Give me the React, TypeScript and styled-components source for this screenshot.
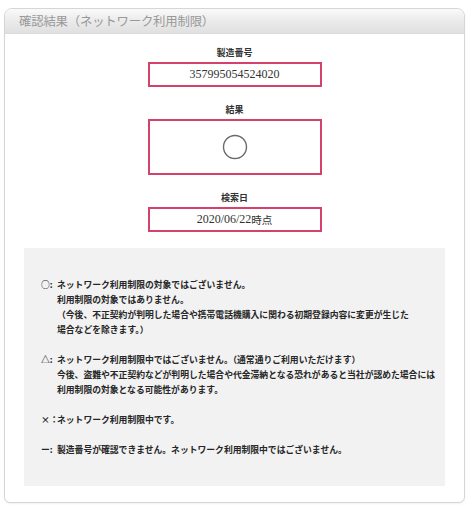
import React from 'react'
import styled, { createGlobalStyle } from 'styled-components'

const GlobalStyle = createGlobalStyle`
  html, body {
    margin: 0;
    padding: 0;
    background: #ffffff;
  }
  body {
    font-family: "Noto Sans CJK JP", "Noto Sans", sans-serif;
    color: #333;
  }
`;

interface INote {
  mark: string;
  lines: string[];
}

const notes: INote[] = [
  {
    mark: '○:',
    lines: [
      'ネットワーク利用制限の対象ではございません。',
      '利用制限の対象ではありません。',
      '（今後、不正契約が判明した場合や携帯電話機購入に関わる初期登録内容に変更が生じた',
      '場合などを除きます。）',
    ],
  },
  {
    mark: '△:',
    lines: [
      'ネットワーク利用制限中ではございません。（通常通りご利用いただけます）',
      '今後、盗難や不正契約などが判明した場合や代金滞納となる恐れがあると当社が認めた場合には',
      '利用制限の対象となる可能性があります。',
    ],
  },
  {
    mark: '×：',
    lines: ['ネットワーク利用制限中です。'],
  },
  {
    mark: 'ー:',
    lines: ['製造番号が確認できません。ネットワーク利用制限中ではございません。'],
  },
];

function App() {
  return (
    <>
      <GlobalStyle />
      <Page>
        <Panel>
          <PanelHeader>確認結果（ネットワーク利用制限）</PanelHeader>
          <PanelBody>
            <Field>
              <FieldLabel>製造番号</FieldLabel>
              <ValueBox>357995054524020</ValueBox>
            </Field>
            <Field>
              <FieldLabel>結果</FieldLabel>
              <ValueBox $tall>
                <svg width="26" height="26" viewBox="0 0 26 26">
                  <circle cx="13" cy="13" r="11.5" fill="none" stroke="#6a6a6a" strokeWidth="1.4" />
                </svg>
              </ValueBox>
            </Field>
            <Field>
              <FieldLabel>検索日</FieldLabel>
              <ValueBox>
                2020/06/22<CjkSuffix>時点</CjkSuffix>
              </ValueBox>
            </Field>
            <NoteBox>
              {notes.map((note) => (
                <NoteItem key={note.mark}>
                  <NoteMark>{note.mark}</NoteMark>
                  <NoteText>
                    {note.lines.map((line) => (
                      <div key={line}>{line}</div>
                    ))}
                  </NoteText>
                </NoteItem>
              ))}
            </NoteBox>
          </PanelBody>
        </Panel>
      </Page>
    </>
  )
}

const Page = styled.div`
  padding: 8px 4px 10px 4px;
`;

const Panel = styled.div`
  width: 461px;
  box-sizing: border-box;
  border: 1px solid #d6d6d6;
  border-radius: 8px 8px 6px 6px;
  background: #ffffff;
  box-shadow: 0 1px 2px rgba(0, 0, 0, 0.06);
  overflow: hidden;
`;

const PanelHeader = styled.div`
  height: 24px;
  line-height: 24px;
  padding: 0 14px;
  font-size: 12.4px;
  color: #999999;
  background: linear-gradient(to bottom, #fafafa 0%, #ececec 45%, #e0e0e0 100%);
  border-bottom: 1px solid #dadada;
  letter-spacing: -0.2px;
`;

const PanelBody = styled.div`
  padding: 13px 19px 16px 19px;
  display: flex;
  flex-direction: column;
  align-items: center;
`;

const Field = styled.div`
  display: flex;
  flex-direction: column;
  align-items: center;
  margin-bottom: 17px;
`;

const FieldLabel = styled.div`
  font-size: 9px;
  font-weight: 700;
  line-height: 12px;
  color: #333;
  margin-bottom: 3px;
`;

const ValueBox = styled.div<{ $tall?: boolean }>`
  width: 174px;
  height: ${({ $tall }) => ($tall ? '56px' : '25px')};
  box-sizing: border-box;
  border: 2px solid #d4416b;
  display: flex;
  align-items: center;
  justify-content: center;
  font-family: "Liberation Serif", "Noto Sans CJK JP", serif;
  font-size: 12px;
  color: #333;
`;

const CjkSuffix = styled.span`
  font-family: "Noto Sans CJK JP", sans-serif;
  font-size: 10.5px;
`;

const NoteBox = styled.div`
  align-self: stretch;
  background: #f2f2f2;
  padding: 29px 10px 29px 17px;
  margin-top: -1px;
  display: flex;
  flex-direction: column;
  gap: 15px;
`;

const NoteItem = styled.div`
  display: flex;
  font-size: 8.8px;
  font-weight: 700;
  line-height: 15px;
  color: #262626;
`;

const NoteMark = styled.span`
  width: 16px;
  flex-shrink: 0;
  white-space: nowrap;
`;

const NoteText = styled.div`
  white-space: nowrap;
`;

export default App
